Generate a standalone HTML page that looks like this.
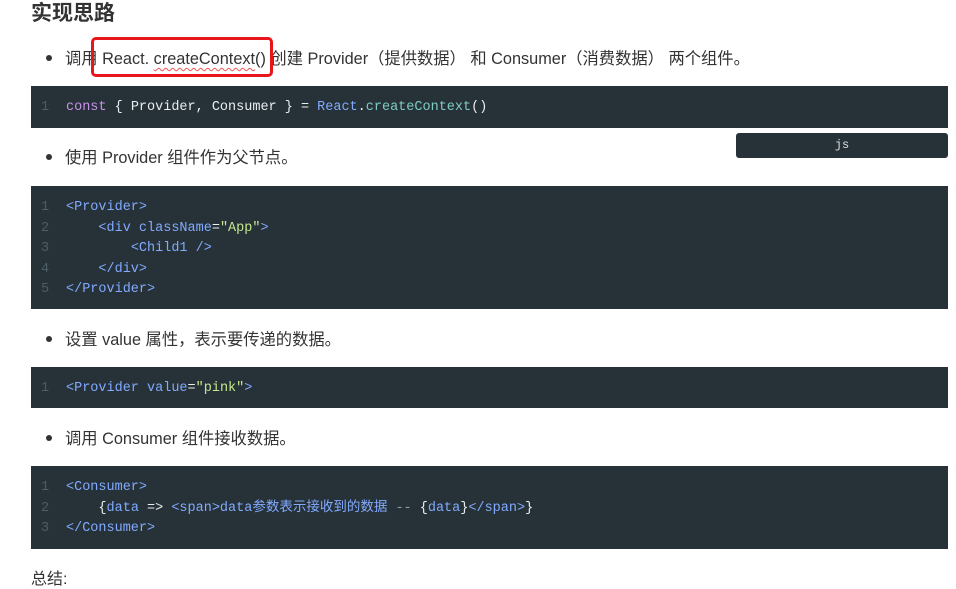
<!DOCTYPE html>
<html><head><meta charset="utf-8"><style>
body{margin:0;width:956px;height:577px;overflow:hidden;background:#fff;font-family:"Liberation Sans","Noto Sans CJK SC",sans-serif;color:#333;position:relative}
.a{position:absolute}
h1{position:absolute;left:31px;top:-3px;margin:0;font-size:21px;font-weight:bold;color:#333}
.li{position:absolute;left:46px;font-size:16.3px;color:#333;white-space:nowrap}
.li:before{content:"";position:absolute;left:0;top:10px;width:6px;height:6px;border-radius:50%;background:#333}
.li span.t{margin-left:19px}
.code{position:absolute;left:31px;width:917px;background:#263238;font-family:"Liberation Mono","Noto Sans CJK SC",monospace;font-size:13.5px;color:#e9eef0;box-sizing:border-box;padding-top:12px}
.ln{position:absolute;left:10px;color:#4d5d66}
.l{height:20.5px;line-height:20.5px;position:relative;white-space:pre}
.c{position:absolute;left:35px}
.tg{color:#82aaff}.s{color:#c3e88d}.k{color:#c792ea}.f{color:#82aaff}.m{color:#80cbc4}
</style></head><body>
<h1>实现思路</h1>
<div class="li" style="top:45px"><span class="t">调用 React. <span style="text-decoration:underline wavy #e55;text-underline-offset:3px;text-decoration-thickness:1px">createContext</span>() 创建 Provider（提供数据） 和 Consumer（消费数据） 两个组件。</span></div>
<div class="a" style="left:91px;top:37px;width:182px;height:40px;border:3px solid #e8151b;border-radius:5px;box-sizing:border-box"></div>
<div class="code" style="top:86px;height:42px"><div class="l"><span class="ln">1</span><span class="c"><span class="k">const</span> { Provider, Consumer } = <span class="f">React</span>.<span class="m">createContext</span>()</span></div></div>
<div class="a" style="left:736px;top:133px;width:212px;height:25px;background:#263238;border-radius:3px;color:#ddd;font-family:'Liberation Mono',monospace;font-size:12px;text-align:center;line-height:25px">js</div>
<div class="li" style="top:144px"><span class="t">使用 Provider 组件作为父节点。</span></div>
<div class="code" style="top:186px;height:123px"><div class="l"><span class="ln">1</span><span class="c"><span class="tg">&lt;Provider&gt;</span></span></div><div class="l"><span class="ln">2</span><span class="c">    <span class="tg">&lt;div</span> <span class="tg">className</span>=<span class="s">"App"</span><span class="tg">&gt;</span></span></div><div class="l"><span class="ln">3</span><span class="c">        <span class="tg">&lt;Child1 /&gt;</span></span></div><div class="l"><span class="ln">4</span><span class="c">    <span class="tg">&lt;/div&gt;</span></span></div><div class="l"><span class="ln">5</span><span class="c"><span class="tg">&lt;/Provider&gt;</span></span></div></div>
<div class="li" style="top:326px"><span class="t">设置 value 属性，表示要传递的数据。</span></div>
<div class="code" style="top:367px;height:41px"><div class="l"><span class="ln">1</span><span class="c"><span class="tg">&lt;Provider</span> <span class="tg">value</span>=<span class="s">"pink"</span><span class="tg">&gt;</span></span></div></div>
<div class="li" style="top:425px"><span class="t">调用 Consumer 组件接收数据。</span></div>
<div class="code" style="top:466px;height:83px"><div class="l"><span class="ln">1</span><span class="c"><span class="tg">&lt;Consumer&gt;</span></span></div><div class="l"><span class="ln">2</span><span class="c">    {<span class="tg">data</span> =&gt; <span class="tg">&lt;span&gt;data参数表示接收到的数据</span> <span style="color:#8ea0aa">--</span> {<span class="tg">data</span>}<span class="tg">&lt;/span&gt;</span>}</span></div><div class="l"><span class="ln">3</span><span class="c"><span class="tg">&lt;/Consumer&gt;</span></span></div></div>
<div class="a" style="left:31px;top:565px;font-size:16px;color:#333">总结:</div>
</body></html>
